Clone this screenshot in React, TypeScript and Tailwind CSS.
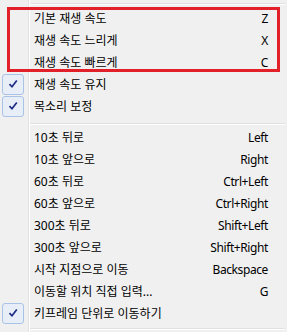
type Item = { label: string; key?: string; checked?: boolean };

const speed: Item[] = [
  { label: '기본 재생 속도', key: 'Z' },
  { label: '재생 속도 느리게', key: 'X' },
  { label: '재생 속도 빠르게', key: 'C' },
  { label: '재생 속도 유지', checked: true },
  { label: '목소리 보정', checked: true },
];

const seek: Item[] = [
  { label: '10초 뒤로', key: 'Left' },
  { label: '10초 앞으로', key: 'Right' },
  { label: '60초 뒤로', key: 'Ctrl+Left' },
  { label: '60초 앞으로', key: 'Ctrl+Right' },
  { label: '300초 뒤로', key: 'Shift+Left' },
  { label: '300초 앞으로', key: 'Shift+Right' },
  { label: '시작 지점으로 이동', key: 'Backspace' },
  { label: '이동할 위치 직접 입력...', key: 'G' },
  { label: '키프레임 단위로 이동하기', checked: true },
];

function Check() {
  return (
    <div className="ml-[2px] w-[22px] h-[21px] rounded-[3px] border border-[#a9c3e6] bg-[#e8eef8] flex items-center justify-center">
      <svg width="12" height="12" viewBox="0 0 12 12">
        <path d="M2.5 6.2 L5 8.8 L9.8 2.6" fill="none" stroke="#1c2b86" strokeWidth="1.7" />
      </svg>
    </div>
  );
}

function Row({ item }: { item: Item }) {
  return (
    <div className="flex h-[22px]">
      <div className="w-[29px] border-r border-[#e2e3e3] flex items-center">
        {item.checked && <Check />}
      </div>
      <div className="flex-1 border-l border-white flex items-center justify-between pl-[4px] pr-[19px] pt-[1px]">
        <span>{item.label}</span>
        {item.key && <span className="tracking-[-0.4px]">{item.key}</span>}
      </div>
    </div>
  );
}

function Separator({ h, top }: { h: string; top: string }) {
  return (
    <div className={`flex ${h}`}>
      <div className="w-[29px] border-r border-[#e2e3e3]" />
      <div className="flex-1 border-l border-white pr-[2px]">
        <div className={`${top} h-px bg-[#e0e0e0]`} />
        <div className="h-px bg-white" />
      </div>
    </div>
  );
}

export default function App() {
  return (
    <div className="relative w-[287px] h-[332px] overflow-hidden bg-[#f0f0f0] text-[12px] leading-none text-black font-['Noto_Sans','Noto_Sans_CJK_KR',sans-serif]">
      <Separator h="h-[7px]" top="mt-[3px]" />
      {speed.map((it) => (
        <Row key={it.label} item={it} />
      ))}
      <Separator h="h-[9px]" top="mt-[6px]" />
      {seek.map((it) => (
        <Row key={it.label} item={it} />
      ))}
      <Separator h="h-[8px]" top="mt-[4px]" />

      {/* annotation box */}
      <div className="absolute left-[7px] top-[7px] w-[273px] h-[65px] border-[3px] border-[#e1202a]" />
    </div>
  );
}
